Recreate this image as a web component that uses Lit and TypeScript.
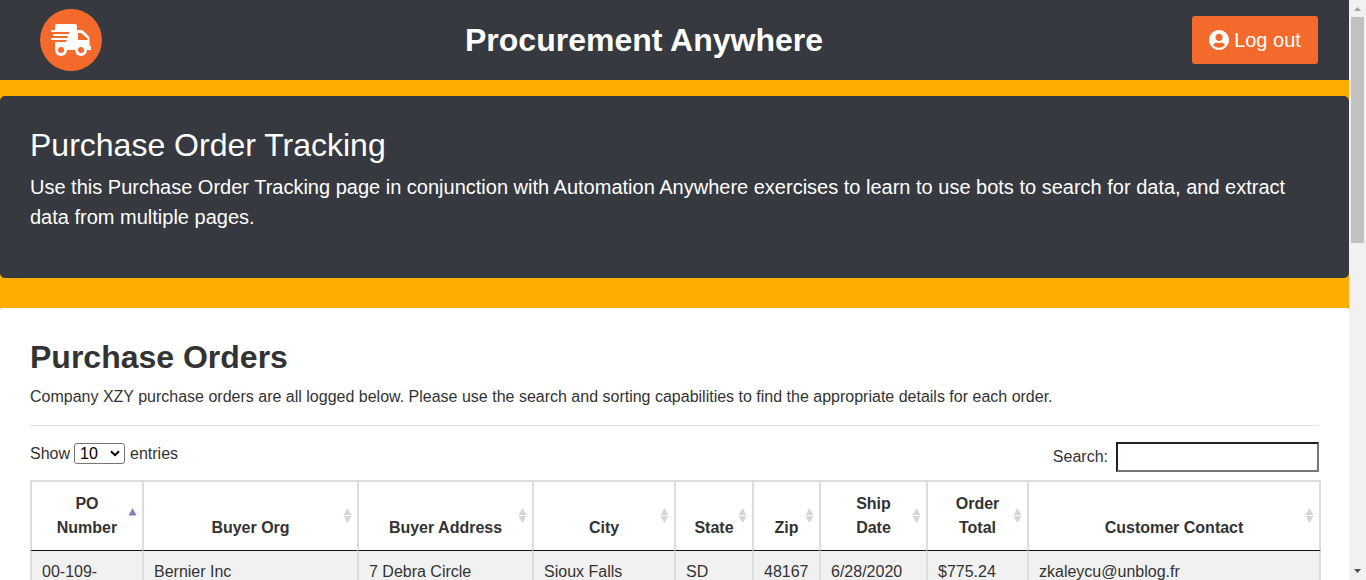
import { LitElement, html, css, svg } from "lit";
import { customElement } from "lit/decorators.js";

interface Column {
  lines: string[];
  width: number;
  sorted?: boolean;
}

const COLUMNS: Column[] = [
  { lines: ["PO", "Number"], width: 112, sorted: true },
  { lines: ["Buyer Org"], width: 215 },
  { lines: ["Buyer Address"], width: 175 },
  { lines: ["City"], width: 142 },
  { lines: ["State"], width: 78 },
  { lines: ["Zip"], width: 67 },
  { lines: ["Ship", "Date"], width: 107 },
  { lines: ["Order", "Total"], width: 101 },
  { lines: ["Customer Contact"], width: 294 },
];

const ROWS: string[][] = [
  ["00-109-", "Bernier Inc", "7 Debra Circle", "Sioux Falls", "SD", "48167", "6/28/2020", "$775.24", "zkaleycu@unblog.fr"],
];

@customElement("po-scrollbar")
class PoScrollbar extends LitElement {
  static styles = css`
    :host { display: flex; flex-direction: column; align-items: center; width: 17px; flex: none; background: #f1f1f1; }
    .arrow { width: 17px; height: 17px; flex: none; display: block; }
    .thumb { width: 13px; height: 226px; background: #c1c1c1; }
    .space { flex: 1; }
  `;
  render() {
    return html`
      <svg class="arrow" viewBox="0 0 17 17"><path d="M5 11h7L8.500 7z" fill="#a3a3a3" /></svg>
      <div class="thumb"></div>
      <div class="space"></div>
      <svg class="arrow" viewBox="0 0 17 17"><path d="M5 6h7L8.500 10z" fill="#505050" /></svg>
    `;
  }
}

@customElement("sort-mark")
class SortMark extends LitElement {
  static properties = { active: { type: Boolean } };
  declare active: boolean;
  static styles = css`
    :host { display: block; position: absolute; right: 5px; top: 26px; width: 9px; height: 16px; }
    svg { display: block; }
  `;
  render() {
    return html`<svg width="9" height="16" viewBox="0 0 9 16">
      ${this.active
        ? svg`<path d="M0.500 7.500h8L4.500 0z" fill="#8480be" />`
        : svg`<path d="M0.500 7h8L4.500 0zM0.500 8h8L4.500 15z" fill="#d6d6d6" />`}
    </svg>`;
  }
}

@customElement("app-root")
class AppRoot extends LitElement {
  static styles = css`
    :host {
      display: flex;
      height: 580px;
      overflow: hidden;
      background: #ffad00;
      color: #333;
      font: 16px/24px "Liberation Sans", Arial, sans-serif;
    }
    .page { flex: 1; min-width: 0; overflow: hidden; }
    .nav {
      height: 80px;
      box-sizing: border-box;
      padding: 0 31px 0 40px;
      background: #363940;
      display: flex;
      gap: 363px;
      align-items: center;
      justify-content: space-between;
      color: #fff;
    }
    .logo { display: block; width: 62px; height: 62px; flex: none; }
    .brand { margin: 0 auto 0 0; font-size: 32px; line-height: 40px; font-weight: 700; white-space: nowrap; }
    .logout {
      flex: none;
      box-sizing: border-box;
      width: 126px;
      height: 48px;
      border-radius: 3px;
      background: #f4692c;
      display: flex;
      align-items: center;
      justify-content: center;
      gap: 5px;
      font-size: 20px;
    }
    .logout svg { display: block; }
    .hero {
      margin-top: 16px;
      height: 182px;
      box-sizing: border-box;
      padding: 30px 30px 29px;
      border-radius: 5px;
      background: #363940;
      color: #fff;
    }
    .hero-title { margin: 0 0 8px; font-size: 32px; line-height: 38px; font-weight: 400; }
    .hero-text { margin: 0; font-size: 20px; line-height: 30px; }
    .orders { margin-top: 30px; padding: 30px 28px 0 30px; border-radius: 2px; background: #fff; height: 600px; }
    .orders-title { margin: 0 0 9px; font-size: 32px; line-height: 38px; font-weight: 700; }
    .orders-text { margin: 0; }
    .rule { height: 1px; margin: 16px 2px 16px 0; background: #e5e5e5; }
    .tools { display: flex; justify-content: space-between; height: 38px; padding-right: 2px; }
    .length { display: flex; align-items: center; gap: 4px; height: 23px; }
    .entries { margin-left: 1px; }
    .select {
      display: flex;
      align-items: center;
      justify-content: space-between;
      box-sizing: border-box;
      width: 51px;
      height: 21px;
      padding: 0 4px 0 5px;
      border: 1px solid #767676;
      border-radius: 3px;
      color: #000;
    }
    .search { display: flex; align-items: center; gap: 8px; height: 30px; }
    .field { box-sizing: border-box; width: 203px; height: 30px; border: 2px solid; border-color: #222 #767676 #767676 #222; }
    .table { table-layout: fixed; width: 1291px; border-spacing: 0; }
    th, td { border-left: 2px solid #ddd; box-sizing: border-box; white-space: nowrap; }
    th:last-child, td:last-child { border-right: 2px solid #ddd; }
    th { position: relative; height: 71px; padding: 0 0 10px; border-top: 2px solid #ddd; border-bottom: 1px solid #111; vertical-align: bottom; text-align: center; }
    td { padding: 9px 8px 10px 10px; background: #f1f1f1; }
  `;

  render() {
    return html`
      <div class="page">
        <header class="nav">
          <svg class="logo" viewBox="0 0 62 62">
            <circle cx="31" cy="31" r="31" fill="#f4692c" />
            <path fill="#fff" d="M17 15h18q2 0 2 2v4h4q1.500 0 2.500 1l5 5q1 1 1 2.500V37h1.500v4H15V17q0-2 2-2z" />
            <path fill="#f4692c" d="M10 21h20l-4 12H10z" />
            <path fill="#fff" d="M11 21h21v2H11zM13 25h18v2H13zM11 29h18v2H11z" />
            <path fill="#f4692c" d="M38 24h3l6.500 5.500V31H38z" />
            <circle cx="21" cy="41" r="6" fill="#fff" />
            <circle cx="41" cy="41" r="6" fill="#fff" />
            <circle cx="21" cy="41" r="3" fill="#f4692c" />
            <circle cx="41" cy="41" r="3" fill="#f4692c" />
          </svg>
          <h1 class="brand">Procurement Anywhere</h1>
          <div class="logout">
            <svg width="20" height="20" viewBox="0 0 496 496">
              <path fill="#fff" d="M248 0C111 0 0 111 0 248s111 248 248 248 248-111 248-248S385 0 248 0zm0 96c48.600 0 88 39.400 88 88s-39.400 88-88 88-88-39.400-88-88 39.400-88 88-88zm0 344c-58.700 0-111.300-26.600-146.500-68.200 18.800-35.400 55.600-59.800 98.500-59.800 2.400 0 4.800.4 7.100 1.100 13 4.200 26.600 6.900 40.900 6.900s28-2.700 40.900-6.900c2.300-.7 4.700-1.100 7.100-1.100 42.900 0 79.700 24.400 98.500 59.800C359.300 413.400 306.700 440 248 440z" />
            </svg>
            <span>Log out</span>
          </div>
        </header>
        <section class="hero">
          <h2 class="hero-title">Purchase Order Tracking</h2>
          <p class="hero-text">Use this Purchase Order Tracking page in conjunction with Automation Anywhere exercises to learn to use bots to search for data, and extract data from multiple pages.</p>
        </section>
        <main class="orders">
          <h2 class="orders-title">Purchase Orders</h2>
          <p class="orders-text">Company XZY purchase orders are all logged below. Please use the search and sorting capabilities to find the appropriate details for each order.</p>
          <div class="rule"></div>
          <div class="tools">
            <div class="length">
              <span>Show</span>
              <span class="select">10<svg width="10" height="7" viewBox="0 0 10 7"><path d="M1 1.200l4 4 4-4" fill="none" stroke="#000" stroke-width="2" /></svg></span>
              <span class="entries">entries</span>
            </div>
            <div class="search"><span>Search:</span><span class="field"></span></div>
          </div>
          <table class="table">
            <colgroup>${COLUMNS.map((c) => html`<col style="width:${c.width}px" />`)}</colgroup>
            <thead>
              <tr>${COLUMNS.map((c) => html`<th>${c.lines.map((l, i) => (i ? html`<br />${l}` : l))}<sort-mark ?active=${c.sorted}></sort-mark></th>`)}</tr>
            </thead>
            <tbody>
              ${ROWS.map((r) => html`<tr>${r.map((v) => html`<td>${v}</td>`)}</tr>`)}
            </tbody>
          </table>
        </main>
      </div>
      <po-scrollbar></po-scrollbar>
    `;
  }
}
